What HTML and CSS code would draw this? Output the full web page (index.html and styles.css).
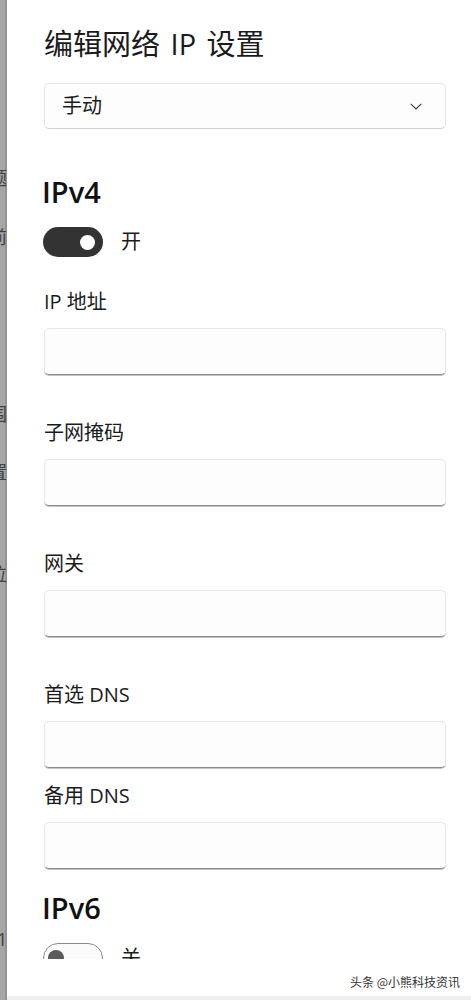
FILE: index.html
```html
<!DOCTYPE html>
<html lang="zh-CN">
<head>
<meta charset="utf-8">
<title>编辑网络 IP 设置</title>
<link rel="stylesheet" href="styles.css">
</head>
<body>
<div class="screen">
  <aside class="backdrop">
    <span class="bg-char c1">题</span>
    <span class="bg-char c2">前</span>
    <span class="bg-char c3">围</span>
    <span class="bg-char c4">置</span>
    <span class="bg-char c5">位</span>
    <span class="bg-char c6">1</span>
  </aside>
  <main class="dialog">
    <div class="scroll">
      <h1 class="title">编辑网络 IP 设置</h1>
      <div class="select">
        <span class="select-text">手动</span>
        <svg class="chevron" width="12" height="7" viewBox="0 0 12 7"><path d="M0.8 0.8 L6 6 L11.2 0.8" fill="none" stroke="#3a3a3a" stroke-width="1.1"/></svg>
      </div>

      <h2 class="section">IPv4</h2>
      <div class="toggle-row">
        <span class="toggle on"><span class="knob"></span></span>
        <span class="toggle-label">开</span>
      </div>

      <div class="field first">
        <div class="label">IP 地址</div>
        <div class="input"></div>
      </div>
      <div class="field">
        <div class="label">子网掩码</div>
        <div class="input"></div>
      </div>
      <div class="field">
        <div class="label">网关</div>
        <div class="input"></div>
      </div>
      <div class="field">
        <div class="label">首选 DNS</div>
        <div class="input"></div>
      </div>
      <div class="field tight">
        <div class="label">备用 DNS</div>
        <div class="input"></div>
      </div>

      <h2 class="section v6">IPv6</h2>
      <div class="toggle-row">
        <span class="toggle off"><span class="knob"></span></span>
        <span class="toggle-label">关</span>
      </div>
    </div>
    <footer class="footer">
      <span class="watermark">头条 @小熊科技资讯</span>
    </footer>
    <div class="bottombar"></div>
  </main>
</div>
</body>
</html>
```

FILE: styles.css
```css
* { box-sizing: border-box; }

html, body {
  margin: 0;
  padding: 0;
  background: #ffffff;
}

body {
  font-family: "Open Sans", "Noto Sans CJK SC", sans-serif;
  color: #1b1b1b;
  overflow: hidden;
}

.screen {
  display: flex;
  width: 471px;
  height: 1000px;
  overflow: hidden;
}

.backdrop {
  position: relative;
  flex: 0 0 7px;
  height: 100%;
  background: linear-gradient(to right, #a6a6a6 0, #a6a6a6 5px, #939393 5px, #939393 7px);
  overflow: hidden;
}

.bg-char {
  position: absolute;
  left: -11px;
  font-family: "Noto Sans CJK SC", sans-serif;
  font-size: 18px;
  line-height: 18px;
  color: #404040;
}
.c1 { top: 168px; }
.c2 { top: 227px; }
.c3 { top: 404px; }
.c4 { top: 462px; }
.c5 { top: 564px; }
.c6 { top: 930px; left: -3px; font-family: "Open Sans", sans-serif; }

.dialog {
  flex: 1;
  display: flex;
  flex-direction: column;
  height: 100%;
  background: #ffffff;
}

.scroll {
  height: 959px;
  overflow: hidden;
  padding: 26px 25px 0 37px;
  flex: 0 0 auto;
}

.title {
  margin: 0;
  font-family: "Open Sans", "Noto Sans CJK SC", sans-serif;
  font-weight: 400;
  font-size: 29px;
  line-height: 36px;
  word-spacing: 3px;
  color: #1b1b1b;
}

.select {
  margin-top: 21px;
  height: 46px;
  display: flex;
  align-items: center;
  justify-content: space-between;
  padding: 0 23px 0 17px;
  border: 1px solid #e6e6e6;
  border-bottom-color: #d0d0d0;
  border-radius: 5px;
  background: #fdfdfd;
}

.select-text {
  font-size: 20px;
  line-height: 28px;
}

.chevron { display: block; }

.section {
  margin: 45px 0 0 -2px;
  font-family: "Open Sans", sans-serif;
  font-weight: 600;
  font-size: 29px;
  line-height: 36px;
  color: #111;
}

.section.v6 { margin-top: 21px; }

.toggle-row {
  margin-top: 17px;
  display: flex;
  align-items: center;
  height: 30px;
}

.toggle {
  flex: 0 0 60px;
  width: 60px;
  height: 30px;
  border-radius: 15px;
  display: flex;
  align-items: center;
  margin-left: -1px;
}

.toggle.on {
  background: #333333;
  justify-content: flex-end;
  padding-right: 8px;
}

.toggle.on .knob {
  width: 15px;
  height: 15px;
  border-radius: 50%;
  background: #ffffff;
}

.toggle.off {
  background: #fbfbfb;
  border: 1px solid #8a8a8a;
  padding-left: 4px;
}

.toggle.off .knob {
  width: 16px;
  height: 16px;
  border-radius: 50%;
  background: #5a5a5a;
}

.toggle-label {
  margin-left: 18px;
  font-size: 20px;
  line-height: 28px;
}

.field {
  margin-top: 44px;
}
.field.first { margin-top: 31px; }
.field.tight { margin-top: 14px; }

.label {
  font-size: 20px;
  line-height: 28px;
  color: #1b1b1b;
}

.input {
  margin-top: 12px;
  height: 47px;
  border: 1px solid #e8e8e8;
  border-bottom: 1px solid #8a8a8a;
  border-radius: 5px;
  background: #fdfdfd;
  box-shadow: 0 1px 0 #c4c4c4;
}

.footer {
  flex: 0 0 37px;
  display: flex;
  justify-content: flex-end;
  align-items: flex-end;
  padding: 0 11px 6px 0;
  background: #ffffff;
}

.watermark {
  font-family: "Noto Sans CJK SC", sans-serif;
  font-size: 12px;
  line-height: 16px;
  color: #333333;
}

.bottombar {
  flex: 0 0 4px;
  background: #efefef;
}
```
